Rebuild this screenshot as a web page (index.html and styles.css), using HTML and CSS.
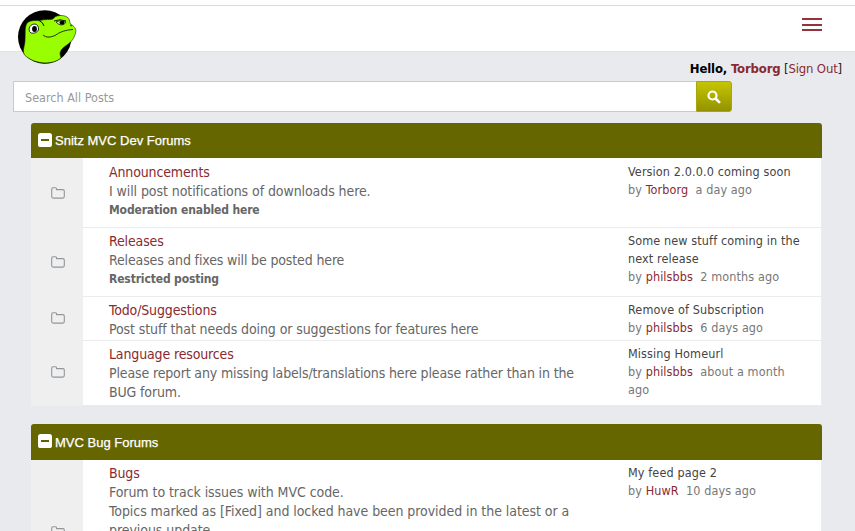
FILE: index.html
```html
<!DOCTYPE html>
<html lang="en">
<head>
<meta charset="utf-8">
<title>Snitz MVC Forums</title>
<link rel="stylesheet" href="styles.css">
</head>
<body>
<svg width="0" height="0" class="defs" aria-hidden="true">
  <symbol id="folder" viewBox="0 0 14 12"><path d="M.7 2.2Q.7.8 2 .8H4.4Q5.6.8 5.6 2V2.6H11.8Q13.3 2.6 13.3 4V9.6Q13.3 11.1 11.8 11.1H2.2Q.7 11.1.7 9.6Z" fill="none" stroke="#91969b" stroke-width="1.1"/></symbol>
  <symbol id="minus" viewBox="0 0 14 14"><rect width="14" height="14" rx="2.6" fill="#fff"/><path d="M3 7H11" stroke="#606000" stroke-width="2"/></symbol>
</svg>
<header class="navbar">
  <a class="logo" href="#" aria-label="Home">
    <svg width="60" height="56" viewBox="0 0 60 56">
      <circle cx="27.8" cy="28" r="26.8" fill="#000"/>
      <path d="M9.5 15C12 11 18 11.500 23 11.500C28 10 33 11 36 10C38 6 46 5.500 50 8C53 9.500 52 12 53.500 15C57 17 60 20 58.500 24C57 30 54 33 50 36C45 39 43 42 43 45L44 49C36 56 18 56 7.500 46C5 41 8 37 8 31C8.500 26 7.500 19 9.500 15Z" fill="#9f0" stroke="#172300" stroke-width=".6"/>
      <path d="M12 20Q13 15 18 15Q22 16 21.500 21Q19 25 14 24Q12 23 12 20Z" fill="#fff" stroke="#000" stroke-width=".8"/>
      <ellipse cx="17.500" cy="20" rx="2.4" ry="3"/>
      <path d="M22 11.500Q26 13 27 17M37 12Q43 9.500 49 12" fill="none" stroke="#000" stroke-width=".9"/>
      <path d="M39 13Q43 10 49 13Q47 17 42 15.500Z" fill="#d9e8ae" stroke="#000" stroke-width=".7"/>
      <ellipse cx="45" cy="13.800" rx="2.5" ry="2"/>
      <path d="M26 26Q30 30 38 26.500Q45 21 56 20.500M53 16L55 17" fill="none" stroke="#182500" stroke-width=".9"/>
    </svg>
  </a>
  <button class="toggle" aria-label="Menu"><i></i><i></i><i></i></button>
</header>
<div class="hello"><b>Hello, <a href="#">Torborg</a></b> [<a href="#">Sign Out</a>]</div>
<form class="search">
  <input type="text" placeholder="Search All Posts" aria-label="Search">
  <button type="button" aria-label="Search"><svg width="14" height="14" viewBox="0 0 14 14"><circle cx="5.5" cy="5.5" r="4" fill="none" stroke="#fff" stroke-width="2.2"/><path d="M8.5 8.5L12.2 12.2" stroke="#fff" stroke-width="2.6" stroke-linecap="round"/></svg></button>
</form>
<main>
  <section class="panel">
    <h2><svg width="14" height="14"><use href="#minus"/></svg><span>Snitz MVC Dev Forums</span></h2>
    <article class="row tall first">
      <div class="icon"><svg width="14" height="12"><use href="#folder"/></svg></div>
      <div class="info"><a href="#">Announcements</a><p>I will post notifications of downloads here.</p><strong>Moderation enabled here</strong></div>
      <div class="last"><p>Version 2.0.0.0 coming soon</p><span>by <a href="#">Torborg</a>&nbsp; a day ago</span></div>
    </article>
    <article class="row tall">
      <div class="icon"><svg width="14" height="12"><use href="#folder"/></svg></div>
      <div class="info"><a href="#">Releases</a><p>Releases and fixes will be posted here</p><strong>Restricted posting</strong></div>
      <div class="last"><p>Some new stuff coming in the<br>next release</p><span>by <a href="#">philsbbs</a>&nbsp; 2 months ago</span></div>
    </article>
    <article class="row short">
      <div class="icon"><svg width="14" height="12"><use href="#folder"/></svg></div>
      <div class="info"><a href="#">Todo/Suggestions</a><p>Post stuff that needs doing or suggestions for features here</p></div>
      <div class="last"><p>Remove of Subscription</p><span>by <a href="#">philsbbs</a>&nbsp; 6 days ago</span></div>
    </article>
    <article class="row final">
      <div class="icon"><svg width="14" height="12"><use href="#folder"/></svg></div>
      <div class="info"><a href="#">Language resources</a><p>Please report any missing labels/translations here please rather than in the<br>BUG forum.</p></div>
      <div class="last"><p>Missing Homeurl</p><span>by <a href="#">philsbbs</a>&nbsp; about a month<br>ago</span></div>
    </article>
  </section>
  <section class="panel second">
    <h2><svg width="14" height="14"><use href="#minus"/></svg><span>MVC Bug Forums</span></h2>
    <article class="row bugs">
      <div class="icon"><svg width="14" height="12"><use href="#folder"/></svg></div>
      <div class="info"><a href="#">Bugs</a><p>Forum to track issues with MVC code.<br>Topics marked as [Fixed] and locked have been provided in the latest or a<br>previous update.</p></div>
      <div class="last"><p>My feed page 2</p><span>by <a href="#">HuwR</a>&nbsp; 10 days ago</span></div>
    </article>
  </section>
</main>
</body>
</html>
```
FILE: styles.css
```css
* { box-sizing: border-box; }
body { margin: 0; height: 531px; overflow: hidden; background: #e8eaee; color: #666; font-family: Tahoma, "DejaVu Sans Condensed", "Noto Sans", sans-serif; font-size: 14px; }
a { color: #892a30; text-decoration: none; }
p { margin: 0; }
.defs { position: absolute; }
.navbar { height: 52px; padding: 4px 33px 0 17px; border-bottom: 1px solid #dfe1e5; display: flex; justify-content: space-between; align-items: flex-start; background: linear-gradient(#fff 5px, #d9dbdd 5px, #d9dbdd 6px, #fff 6px); }
.logo { height: 48px; margin-top: 5px; }
.logo svg { display: block; overflow: visible; }
.toggle { display: flex; flex-direction: column; gap: 4px; width: 20px; margin-top: 14px; padding: 0; border: 0; background: none; }
.toggle i { height: 2px; width: 20px; background: #92343a; }
.toggle i:first-child { height: 1.5px; }
.toggle i:last-child { margin-top: -.5px; }
.hello { height: 29px; padding: 8px 13px 0 0; line-height: 18px; text-align: right; color: #222; font-size: 13px; letter-spacing: -.16px; }
.hello b { color: #000; }
.search { display: flex; width: 719px; height: 31px; margin-left: 13px; }
.search input { flex: 1; min-width: 0; padding: 1px 11px 0; border: 1px solid #c8cace; border-right: 0; border-radius: 0; background: #fff; font: 12.5px Tahoma, "DejaVu Sans Condensed", sans-serif; color: #555; }
.search input::placeholder { color: #999; opacity: 1; }
.search button { width: 36px; padding: 1px 0 0; border: 1px solid #a6a60e; border-radius: 0 3px 3px 0; background: linear-gradient(#c5c500, #939300); display: grid; place-items: center; }
main { padding: 11px 33px 0 31px; }
.panel h2 { height: 35px; margin: 0; padding: 0 7px; display: flex; align-items: center; gap: 3px; border-radius: 3px 3px 0 0; background: #660; color: #fff; font: 13px "Liberation Sans", Arial, sans-serif; -webkit-text-stroke: .25px #fff; }
.panel h2 svg { position: relative; top: -1px; }
.second { margin-top: 18px; }
.second h2 { height: 36px; }
.row { display: grid; grid-template-columns: 52px 545px 1fr; background: #fff; border-right: 1px solid #ebecee; }
.tall { height: 69px; }
.first { height: 70px; }
.short { height: 44px; }
.final { height: 65px; }
.bugs { height: 145px; }
.icon { background: #efefef; display: grid; place-items: center; padding: 0 0 2px 2px; }
.first .icon { padding-bottom: 1px; }
.final .icon { padding-bottom: 4px; }
.info { padding: 4px 0 0 26px; border-bottom: 1px solid #ececec; line-height: 19px; white-space: nowrap; letter-spacing: -.14px; }
.info > a { display: block; }
.info strong { display: block; font-size: 12px; }
.first p { letter-spacing: -.08px; }
.short p { letter-spacing: -.1px; }
.bugs p { letter-spacing: -.06px; }
.last { padding: 4px 0 0; border-bottom: 1px solid #ececec; font-size: 12.5px; line-height: 18px; white-space: nowrap; color: #777; }
.first .info, .first .last { padding-top: 5px; }
.last p { color: #444; letter-spacing: .12px; }
.last span { letter-spacing: .1px; }
```
